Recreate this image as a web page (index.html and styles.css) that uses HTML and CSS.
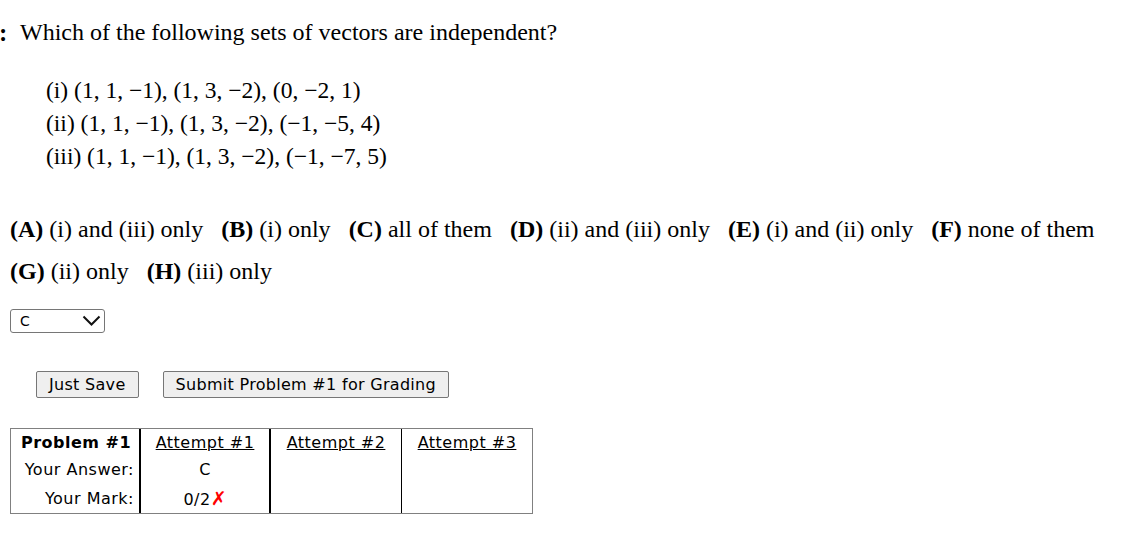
FILE: index.html
```html
<!DOCTYPE html>
<html>
<head>
<meta charset="utf-8">
<link rel="stylesheet" href="styles.css">
</head>
<body>
<div class="page">
  <div class="question"><b class="colon">:</b><span class="qtext">Which of the following sets of vectors are independent?</span></div>
  <div class="vectors">
    <div>(i) (1, 1, −1), (1, 3, −2), (0, −2, 1)</div>
    <div>(ii) (1, 1, −1), (1, 3, −2), (−1, −5, 4)</div>
    <div>(iii) (1, 1, −1), (1, 3, −2), (−1, −7, 5)</div>
  </div>
  <div class="options">
    <div class="optline"><span class="opt"><b>(A)</b> (i) and (iii) only</span><span class="opt"><b>(B)</b> (i) only</span><span class="opt"><b>(C)</b> all of them</span><span class="opt"><b>(D)</b> (ii) and (iii) only</span><span class="opt"><b>(E)</b> (i) and (ii) only</span><span class="opt"><b>(F)</b> none of them</span></div>
    <div class="optline"><span class="opt"><b>(G)</b> (ii) only</span><span class="opt"><b>(H)</b> (iii) only</span></div>
  </div>
  <div class="selectbox"><span class="selval">C</span><svg class="chev" width="19" height="12" viewBox="0 0 19 12"><path d="M1.5 1.5 L9.5 9.5 L17.5 1.5" fill="none" stroke="#111" stroke-width="2"/></svg></div>
  <div class="buttons">
    <button class="btn">Just Save</button>
    <button class="btn">Submit Problem #1 for Grading</button>
  </div>
  <table class="results">
    <colgroup><col class="w1"><col class="w2"><col class="w3"><col class="w4"></colgroup>
    <tr class="head"><th class="lbl">Problem #1</th><td class="c1"><u>Attempt #1</u></td><td class="c2"><u>Attempt #2</u></td><td class="c3"><u>Attempt #3</u></td></tr>
    <tr><td class="lbl">Your Answer:</td><td class="c1">C</td><td class="c2"></td><td class="c3"></td></tr>
    <tr><td class="lbl">Your Mark:</td><td class="c1">0/2<span class="x">✗</span></td><td class="c2"></td><td class="c3"></td></tr>
  </table>
</div>
</body>
</html>
```
FILE: styles.css
```css
html, body { margin: 0; padding: 0; background: #fff; }
body { font-family: "Liberation Serif", "Times New Roman", serif; color: #000; }
.page { padding-left: 10px; }
.question { font-size: 24px; line-height: 25px; margin-top: 20px; display: flex; margin-left: -10px; }
.colon { width: 20px; font-size: 25px; margin-left: -1px; padding-right: 1px; }
.vectors { margin-top: 29px; margin-left: 36px; font-size: 23.5px; line-height: 33px; }
.options { margin-top: 35px; font-size: 24px; line-height: 42px; }
.opt { margin-right: 18px; }
.selectbox { margin-top: 17px; box-sizing: border-box; width: 95px; height: 24px; border: 1px solid #767676; border-radius: 3px; display: flex; align-items: center; justify-content: space-between; padding: 0 3px 0 9px; font-family: "DejaVu Sans", Verdana, sans-serif; font-size: 14px; }
.selval { color: #000; }
.buttons { margin-top: 38px; margin-left: 26px; display: flex; gap: 24px; }
.btn { font-family: "DejaVu Sans", Verdana, sans-serif; font-size: 16px; letter-spacing: 0.3px; height: 27px; padding: 0 12px; background: #efefef; border: 1px solid #767676; border-radius: 2px; color: #000; }
.results { margin-top: 30px; border-collapse: separate; border-spacing: 0; border: 1px solid #808080; table-layout: fixed; width: 523px; font-family: "DejaVu Sans", Verdana, sans-serif; font-size: 16px; letter-spacing: 0.5px; }
.w1 { width: 128px; } .w2 { width: 130px; } .w3 { width: 132px; } .w4 { width: 131px; }
.results th, .results td { height: 29px; padding: 0; vertical-align: middle; box-sizing: border-box; }
.results .head th, .results .head td { height: 26px; }
td.lbl { text-align: right; padding-right: 5px; }
th.lbl { text-align: center; font-weight: bold; padding-left: 2px; }
.c1 { text-align: center; border-left: 2px solid #000; }
.c2 { text-align: center; border-left: 2px solid #000; }
.c3 { text-align: center; border-left: 1px solid #000; }
.x { color: #f00; font-weight: bold; font-size: 19px; line-height: 1; letter-spacing: 0; }
```
